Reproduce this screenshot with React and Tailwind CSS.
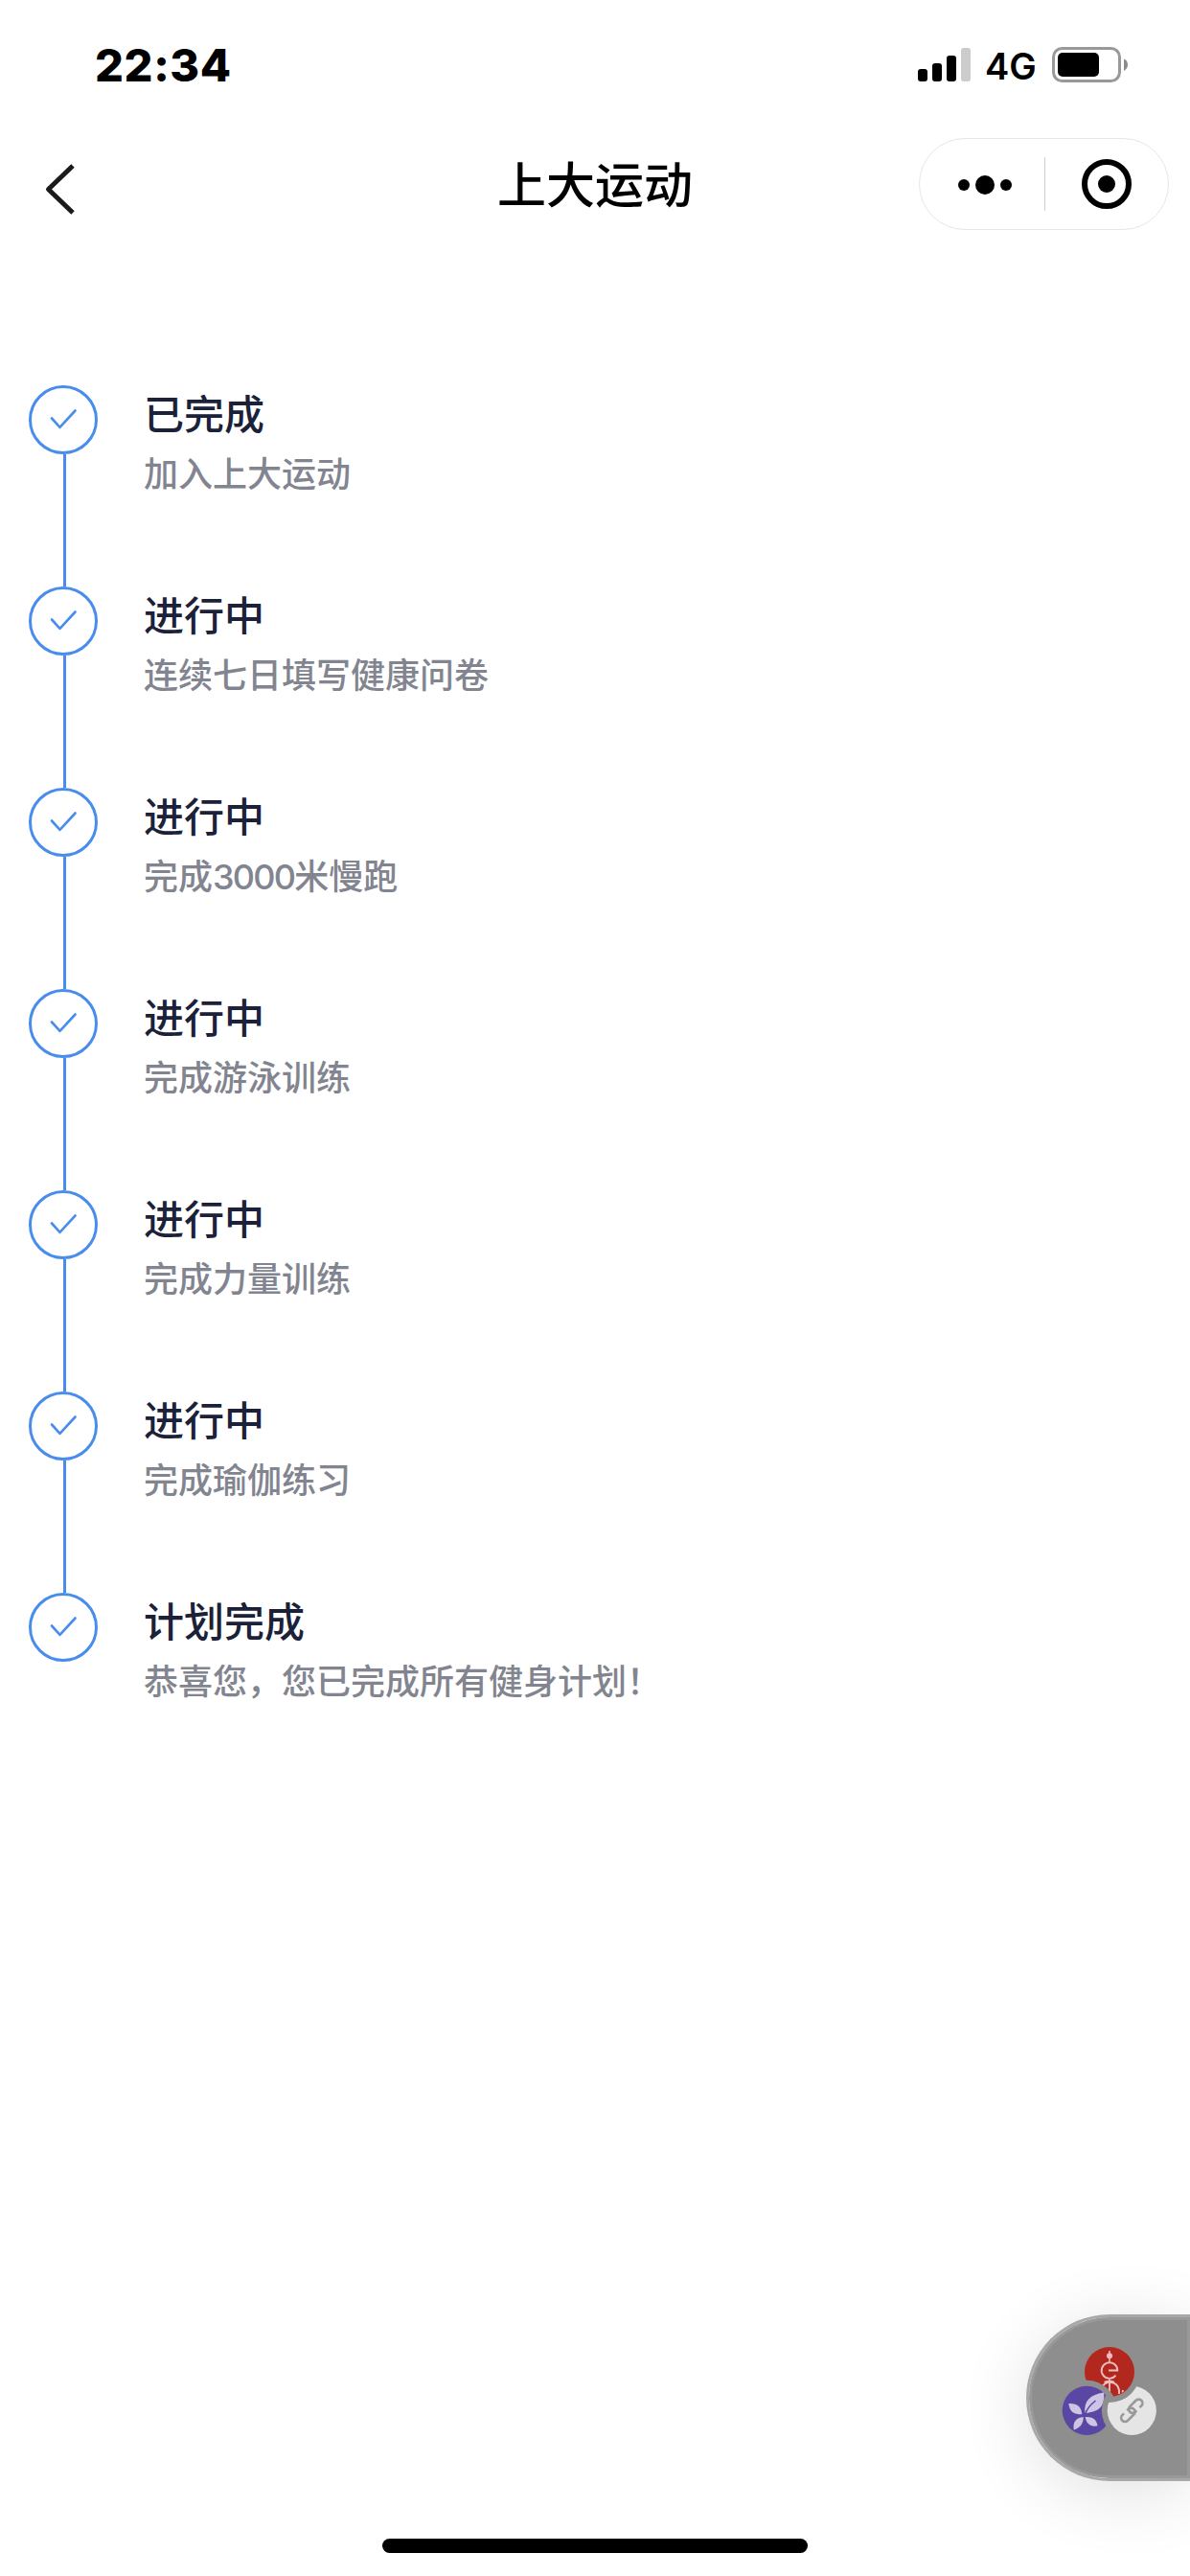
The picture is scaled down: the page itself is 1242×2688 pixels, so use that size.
const steps = [
  { title: "已完成", desc: "加入上大运动" },
  { title: "进行中", desc: "连续七日填写健康问卷" },
  { title: "进行中", desc: "完成3000米慢跑" },
  { title: "进行中", desc: "完成游泳训练" },
  { title: "进行中", desc: "完成力量训练" },
  { title: "进行中", desc: "完成瑜伽练习" },
  { title: "计划完成", desc: "恭喜您，您已完成所有健身计划！" },
];

function StatusBar() {
  return (
    <div className="flex h-[132px] items-start justify-between pl-[99px] pr-[64px]">
      <div className="mt-[38px] text-[47px] font-extrabold leading-[60px] tracking-[0.6px]">22:34</div>
      <div className="mt-[49px] flex items-start">
        <div className="mt-px flex h-[35px] items-end gap-[5px]">
          <div className="h-[13px] w-[10px] rounded-[3px] bg-black" />
          <div className="h-[19px] w-[10px] rounded-[3px] bg-black" />
          <div className="h-[27px] w-[10px] rounded-[3px] bg-black" />
          <div className="h-[35px] w-[10px] rounded-[3px] bg-[#cccccc]" />
        </div>
        <div className="ml-[15px] w-[70px] text-[38px] font-semibold leading-[40px]">4G</div>
        <svg className="h-[37px] w-[80px]" viewBox="0 0 80 37" fill="none">
          <rect x="1.5" y="1.5" width="69" height="34" rx="9" stroke="#999999" strokeWidth="3" />
          <rect x="6" y="6" width="43" height="25" rx="5" fill="#000" />
          <path d="M75 12.500C77.600 13.500 79 15.800 79 18.500S77.600 23.800 75 25Z" fill="#8c8c8c" />
        </svg>
      </div>
    </div>
  );
}

function NavBar() {
  return (
    <div className="grid h-[132px] grid-cols-[1fr_auto_1fr] items-start">
      <svg className="ml-[44px] mt-[37px] h-[57px] w-[40px]" viewBox="0 0 40 57" fill="none" stroke="#1a1a1a" strokeWidth="5" strokeLinejoin="round">
        <path d="M32 4L6.500 28.500L32 53" />
      </svg>
      <h1 className="mt-[27px] text-[51px] font-medium leading-[70px]">上大运动</h1>
      <div className="mr-[22px] mt-[12px] flex h-[96px] w-[261px] items-center justify-self-end rounded-full border border-[#e6e6e6]">
        <div className="flex w-[130px] items-center justify-center gap-[6px] pl-[6px] pt-px">
          <span className="h-[12px] w-[12px] rounded-full bg-black" />
          <span className="h-[20px] w-[20px] rounded-full bg-black" />
          <span className="h-[12px] w-[12px] rounded-full bg-black" />
        </div>
        <div className="h-[56px] w-px bg-[#cfcfcf]" />
        <div className="flex flex-1 justify-center">
          <div className="flex h-[52px] w-[52px] items-center justify-center rounded-full border-[6px] border-black">
            <span className="h-[18px] w-[18px] rounded-full bg-black" />
          </div>
        </div>
      </div>
    </div>
  );
}

function Description({ text }) {
  return text.split(/(\d+)/).map((part, i) =>
    /^\d+$/.test(part) ? (
      <span key={i} className="tracking-[-1.75px]">{part}</span>
    ) : (
      part
    )
  );
}

function Step({ title, desc, last }) {
  return (
    <li className="flex h-[210px]">
      <div className="flex w-[72px] flex-col items-center">
        <div className="flex h-[72px] w-[72px] shrink-0 items-center justify-center rounded-full border-[3px] border-[#488cee]">
          <svg className="h-[30px] w-[30px]" viewBox="0 0 30 30" fill="none" stroke="#488cee" strokeWidth="2.600" strokeLinecap="round" strokeLinejoin="round">
            <path d="M3 13.500L11.500 22.800L27.500 5.500" />
          </svg>
        </div>
        {!last && <div className="ml-[3px] w-[3px] flex-1 bg-[#488cee]" />}
      </div>
      <div className="ml-[48px]">
        <div className="mt-px text-[42px] font-medium leading-[60px] text-[#1a2138]">{title}</div>
        <div className="mt-[5px] text-[36px] font-medium leading-[54px] text-[#82858f]">
          <Description text={desc} />
        </div>
      </div>
    </li>
  );
}

function AppBadges() {
  return (
    <svg className="h-[100px] w-[104px]" viewBox="0 0 104 100" fill="none">
      <defs>
        <mask id="cutRed" maskUnits="userSpaceOnUse" x="0" y="0" width="104" height="100">
          <rect width="104" height="100" fill="#fff" />
          <circle cx="28.300" cy="70.300" r="31.500" fill="#000" />
        </mask>
        <mask id="cutPurple" maskUnits="userSpaceOnUse" x="0" y="0" width="104" height="100">
          <rect width="104" height="100" fill="#fff" />
          <circle cx="75.300" cy="70.300" r="31.500" fill="#000" />
        </mask>
        <mask id="cutWhite" maskUnits="userSpaceOnUse" x="0" y="0" width="104" height="100">
          <rect width="104" height="100" fill="#fff" />
          <circle cx="52" cy="30" r="32" fill="#000" />
        </mask>
        <clipPath id="redDisc"><circle cx="52" cy="30" r="25.500" /></clipPath>
      </defs>
      <g mask="url(#cutRed)">
        <circle cx="52" cy="30" r="26" fill="#b3281e" />
        <g clipPath="url(#redDisc)" stroke="#efbfc0" strokeWidth="1.900">
          <path d="M52 8V20" strokeWidth="1.500" />
          <circle cx="52" cy="13.300" r="3" fill="#efbfc0" stroke="none" />
          <path d="M51 28.500H60.300A8.300 8.300 0 1 0 58.500 33.700" />
          <path d="M52 38V56M46.500 40.800Q52 38.500 57 40.800M44.500 46C46 39.500 60 38 62 49V53M65.800 49V54" />
        </g>
      </g>
      <g mask="url(#cutPurple)">
        <circle cx="28.300" cy="70.300" r="25.600" fill="#5a46a3" />
        <g fill="#cdc5e3">
          <path d="M26.300 73C25 60 32 53.500 46.200 51.500C47 66 42 71 28 73Z" />
          <path d="M9.300 63C18 62.500 22.500 66 23.300 74.300C15 74.500 10.500 72 9.300 63Z" />
          <path d="M24.700 77C17 78 13.500 82 14.700 90.500C21 88.500 25 84 24.700 77Z" />
          <path d="M26.700 77C34 76.500 38.500 79.500 39.500 86.200C33 88 27.500 84 26.700 77Z" />
        </g>
        <path d="M26.800 73.500C29 67.500 33 63.500 37.500 60" stroke="#5a46a3" strokeWidth="1.500" />
      </g>
      <g mask="url(#cutWhite)">
        <circle cx="75.300" cy="70.300" r="25.600" fill="#e5e5e5" />
        <g transform="translate(75.300 70.300) rotate(-45)" stroke="#999999" strokeWidth="2.600" strokeLinecap="butt">
          <path d="M8 3.600H10.500A4 4 0 0 0 10.500 -4.400H1.500A4 4 0 0 0 1.500 3.600H3.500" />
          <path d="M-8 -3.600H-10.500A4 4 0 0 0 -10.500 4.400H-1.500A4 4 0 0 0 -1.500 -3.600H-3.500" />
        </g>
      </g>
    </svg>
  );
}

export default function App() {
  return (
    <div className="flex h-[2688px] w-[1242px] flex-col overflow-hidden bg-white font-['Inter','Noto_Sans_CJK_SC',sans-serif] text-black">
      <StatusBar />
      <NavBar />
      <ul className="mt-[138px] flex flex-col pl-[30px]">
        {steps.map((s, i) => (
          <Step key={i} title={s.title} desc={s.desc} last={i === steps.length - 1} />
        ))}
      </ul>
      <div className="mt-auto flex justify-end">
        <div className="h-[174px] w-[171px] rounded-l-full border-[3px] border-r-0 border-[#a8a8a8] shadow-[0_12px_72px_rgba(0,0,0,0.12)]">
          <div className="h-full w-full rounded-l-full border-[3px] border-[#999999] bg-[#8e8e8e] pl-[29px] pt-[24px]">
            <AppBadges />
          </div>
        </div>
      </div>
      <div className="mb-[24px] mt-[60px] h-[15px] w-[444px] self-center rounded-full bg-black" />
    </div>
  );
}
